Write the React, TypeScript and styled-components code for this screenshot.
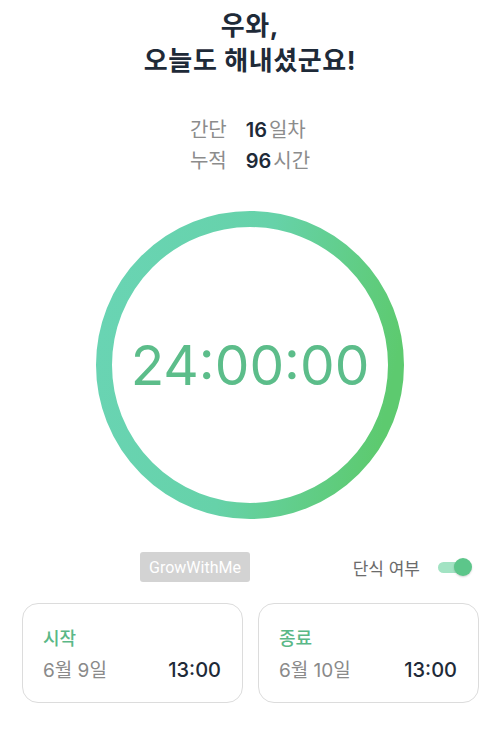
import React from "react";
import styled, { createGlobalStyle } from "styled-components";

const Global = createGlobalStyle`
  html, body { margin: 0; padding: 0; background: #ffffff; }
  body {
    font-family: Inter, "Noto Sans CJK KR", sans-serif;
    -webkit-font-smoothing: antialiased;
  }
  * { box-sizing: border-box; }
`;

const Page = styled.div`
  width: 500px;
  min-height: 729px;
  display: flex;
  flex-direction: column;
  align-items: center;
  background: #fff;
`;

const Title = styled.h1`
  margin: 0;
  padding-top: 8px;
  font-size: 26px;
  line-height: 35px;
  font-weight: 700;
  color: #1e2a38;
  text-align: center;
  letter-spacing: 0.6px;
`;

const Stats = styled.div`
  margin-top: 37px;
  display: grid;
  grid-template-columns: auto auto;
  column-gap: 19px;
  font-size: 20px;
  line-height: 31px;
`;

const StatLabel = styled.span`
  color: #8c8c8c;
`;

const StatValue = styled.span`
  color: #8c8c8c;
  b {
    color: #1e2a38;
    font-weight: 600;
    margin-right: 2px;
  }
`;

const Dial = styled.div`
  margin-top: 34px;
  display: grid;
  place-items: center;
  width: 308px;
  height: 308px;
  & > * { grid-area: 1 / 1; }
`;

const Timer = styled.div`
  font-family: Inter, Roboto, sans-serif;
  font-size: 55px;
  font-weight: 400;
  color: #5cbd8a;
`;

const OptionRow = styled.div`
  margin-top: 33px;
  width: 100%;
  height: 30px;
  padding: 0 28px 0 140px;
  display: flex;
  align-items: center;
  justify-content: space-between;
`;

const Badge = styled.div`
  height: 30px;
  padding: 0 9px;
  display: flex;
  align-items: center;
  background: #d3d3d3;
  border-radius: 3px;
  color: #ffffff;
  font-family: Roboto, sans-serif;
  font-size: 16px;
`;

const FastToggle = styled.div`
  display: flex;
  align-items: center;
  gap: 18px;
  font-size: 17px;
  color: #6b6b6b;
`;

const Switch = styled.div`
  position: relative;
  width: 34px;
  height: 20px;
`;

const Track = styled.div`
  position: absolute;
  left: 0;
  right: 4px;
  top: 5px;
  height: 11px;
  border-radius: 6px;
  background: #a2e3c3;
`;

const Thumb = styled.div`
  position: absolute;
  left: 16px;
  top: 1px;
  width: 18px;
  height: 18px;
  border-radius: 50%;
  background: #5cc68a;
  box-shadow: 0 1px 2px rgba(0, 0, 0, 0.18);
`;

const Cards = styled.div`
  margin-top: 21px;
  width: 100%;
  padding: 0 21px 0 22px;
  display: grid;
  grid-template-columns: 1fr 1fr;
  gap: 15px;
`;

const Card = styled.div`
  height: 100px;
  border: 1px solid #dcdcdc;
  border-radius: 16px;
  padding: 23px 21px 0 20px;
  display: flex;
  flex-direction: column;
`;

const CardLabel = styled.div`
  font-size: 18px;
  line-height: 24px;
  font-weight: 500;
  color: #5ab887;
`;

const CardRow = styled.div`
  margin-top: 6px;
  display: flex;
  justify-content: space-between;
  align-items: baseline;
  line-height: 26px;
`;

const DateText = styled.span`
  font-size: 19px;
  color: #8a8a8a;
`;

const TimeText = styled.span`
  font-size: 20px;
  font-weight: 500;
  color: #1e2a38;
`;

function Ring() {
  return (
    <svg width="308" height="308" viewBox="0 0 308 308">
      <defs>
        <linearGradient id="ringGrad" x1="0" y1="0.3" x2="1" y2="0.5">
          <stop offset="0" stopColor="#69d4b3" />
          <stop offset="0.5" stopColor="#66d2a9" />
          <stop offset="1" stopColor="#5dca6f" />
        </linearGradient>
      </defs>
      <circle cx="154" cy="154" r="146" fill="none" stroke="url(#ringGrad)" strokeWidth="16" />
    </svg>
  );
}

function TimeCard({ label, date, time }: { label: string; date: string; time: string }) {
  return (
    <Card>
      <CardLabel>{label}</CardLabel>
      <CardRow>
        <DateText>{date}</DateText>
        <TimeText>{time}</TimeText>
      </CardRow>
    </Card>
  );
}

export default function App() {
  return (
    <Page>
      <Global />
      <Title>
        우와,
        <br />
        오늘도 해내셨군요!
      </Title>
      <Stats>
        <StatLabel>간단</StatLabel>
        <StatValue>
          <b>16</b>일차
        </StatValue>
        <StatLabel>누적</StatLabel>
        <StatValue>
          <b>96</b>시간
        </StatValue>
      </Stats>
      <Dial>
        <Ring />
        <Timer>24:00:00</Timer>
      </Dial>
      <OptionRow>
        <Badge>GrowWithMe</Badge>
        <FastToggle>
          단식 여부
          <Switch>
            <Track />
            <Thumb />
          </Switch>
        </FastToggle>
      </OptionRow>
      <Cards>
        <TimeCard label="시작" date="6월 9일" time="13:00" />
        <TimeCard label="종료" date="6월 10일" time="13:00" />
      </Cards>
    </Page>
  );
}
